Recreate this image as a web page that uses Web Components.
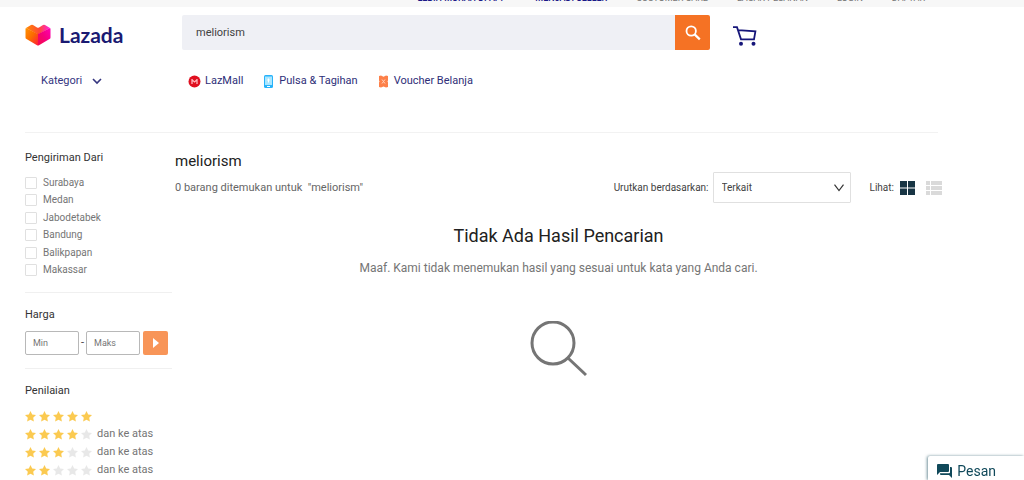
<!DOCTYPE html>
<html lang="id">
<head>
<meta charset="utf-8">
<meta name="viewport" content="width=device-width, initial-scale=1">
<title>meliorism - Lazada</title>
<style>
    body {
        margin: 0;
        background: #fff;
        color: #424242;
        font-family: Roboto, "Liberation Sans", sans-serif;
        font-size: 11px;
        line-height: 16px;
    }
</style>
</head>
<body>
<top-links>
    <a href="#app" class="hot">LEBIH MURAH DI APP</a>
    <a href="#seller" class="hot">MENJADI SELLER</a>
    <a href="#care">CUSTOMER CARE</a>
    <a href="#track">LACAK PESANAN</a>
    <a href="#login">LOGIN</a>
    <a href="#signup">DAFTAR</a>
</top-links>
<site-header query="meliorism"></site-header>
<category-nav>
    <channel-link icon="mall">LazMall</channel-link>
    <channel-link icon="phone">Pulsa &amp; Tagihan</channel-link>
    <channel-link icon="voucher">Voucher Belanja</channel-link>
</category-nav>
<search-page>
    <filter-panel slot="filters">
        <filter-group heading="Pengiriman Dari">
            <div style="display: grid; height: 105px; grid-auto-rows: 1fr">
                <check-option>Surabaya</check-option>
                <check-option>Medan</check-option>
                <check-option>Jabodetabek</check-option>
                <check-option>Bandung</check-option>
                <check-option>Balikpapan</check-option>
                <check-option>Makassar</check-option>
            </div>
        </filter-group>
        <filter-group heading="Harga">
            <price-range></price-range>
        </filter-group>
        <filter-group heading="Penilaian">
            <star-rating value="5"></star-rating>
            <star-rating value="4">dan ke atas</star-rating>
            <star-rating value="3">dan ke atas</star-rating>
            <star-rating value="2">dan ke atas</star-rating>
        </filter-group>
    </filter-panel>
    <result-bar query="meliorism" count="0"></result-bar>
    <empty-result heading="Tidak Ada Hasil Pencarian">
        Maaf. Kami tidak menemukan hasil yang sesuai untuk kata yang Anda cari.
    </empty-result>
</search-page>
<chat-button>Pesan</chat-button>

<script>
class TopLinks extends HTMLElement {
    connectedCallback() {
        this.attachShadow({ mode: 'open' });
        this.shadowRoot.innerHTML = `
            <style>
                :host {
                    display: block;
                    height: 7px;
                    overflow: hidden;
                    background: #f7f7f7;
                }
                nav {
                    display: flex;
                    justify-content: flex-end;
                    gap: 29px;
                    margin-top: -10px;
                    padding-right: 99px;
                }
                ::slotted(a) {
                    color: #757575;
                    font-size: 9px;
                    line-height: 16px;
                    white-space: nowrap;
                    text-decoration: none;
                }
                ::slotted(a.hot) {
                    color: #1a1a87;
                    font-weight: 500;
                }
            </style>
            <nav><slot></slot></nav>
        `;
    }
}
customElements.define('top-links', TopLinks);

class SiteHeader extends HTMLElement {
    connectedCallback() {
        this.attachShadow({ mode: 'open' });
        this.shadowRoot.innerHTML = `
            <style>
                :host {
                    display: block;
                    padding: 8px 82px 0 25px;
                }
                .row {
                    display: grid;
                    grid-template-columns: 157px minmax(0, 1fr) 232px;
                    align-items: center;
                }
                .logo {
                    display: flex;
                    align-items: center;
                    gap: 8px;
                    padding-top: 4px;
                    color: #1a1a72;
                    font: 700 21px/30px Lato, sans-serif;
                    text-decoration: none;
                }
                form {
                    display: flex;
                    height: 35px;
                }
                input {
                    flex: 1;
                    min-width: 0;
                    padding: 0 14px;
                    border: 0;
                    border-radius: 2px 0 0 2px;
                    background: #eff0f5;
                    color: #424242;
                    font: 11px/16px Roboto, sans-serif;
                }
                button {
                    display: grid;
                    place-items: center;
                    width: 35px;
                    padding: 0;
                    border: 0;
                    border-radius: 0 2px 2px 0;
                    background: #f57224;
                }
                .cart {
                    display: flex;
                    padding: 6px 0 0 23px;
                }
            </style>
            <header class="row">
                <a href="#home" class="logo">
                    <svg width="26" height="22" viewBox="0 0 26 22">
                        <defs>
                            <linearGradient id="left" x1="0" y1="0" x2="1" y2="1">
                                <stop offset="0" stop-color="#ff9200"/>
                                <stop offset=".5" stop-color="#fb6a00"/>
                                <stop offset="1" stop-color="#ff1a3c"/>
                            </linearGradient>
                            <linearGradient id="right" x1="1" y1="0" x2="0" y2="1">
                                <stop offset="0" stop-color="#ff00b4"/>
                                <stop offset=".5" stop-color="#f5007c"/>
                                <stop offset="1" stop-color="#f50a48"/>
                            </linearGradient>
                            <linearGradient id="top" x1="0" y1="0" x2="1" y2="0">
                                <stop offset="0" stop-color="#ff8a00"/>
                                <stop offset=".55" stop-color="#ff4a35"/>
                                <stop offset="1" stop-color="#ff20e0"/>
                            </linearGradient>
                        </defs>
                        <path d="M1 4 6 1Q7 .5 8 1L12 3.500Q13 4 14 3.500L18 1Q19 .5 20 1L25 4 13 10.500Z" fill="url(#top)"/>
                        <path d="M1 4Q.5 4.300.5 5V13.500Q.5 14.500 1.500 15L12 21.300Q12.500 21.600 13 21.600V10Z" fill="url(#left)"/>
                        <path d="M25 4Q25.500 4.300 25.500 5V13.500Q25.500 14.500 24.500 15L14 21.300Q13.500 21.600 13 21.600V10Z" fill="url(#right)"/>
                    </svg>
                    Lazada
                </a>
                <form role="search">
                    <input type="text" aria-label="Cari di Lazada" value="${this.getAttribute('query')}">
                    <button type="button" aria-label="Cari">
                        <svg width="16" height="16" viewBox="0 0 16 16" fill="none" stroke="#fff">
                            <circle cx="6.200" cy="6" r="4.700" stroke-width="1.800"/>
                            <path d="m9.600 9.400 5.200 5" stroke-width="2.200"/>
                        </svg>
                    </button>
                </form>
                <a href="#cart" class="cart" aria-label="Keranjang">
                    <svg width="24" height="20" viewBox="0 0 24 20" fill="none" stroke="#16167a" stroke-width="1.800">
                        <path d="M0 1.200H4L8 13.300H21L22.400 5.300 5.200 4.200"/>
                        <circle cx="8" cy="17.800" r="2" fill="#16167a" stroke="none"/>
                        <circle cx="20.500" cy="17.800" r="2" fill="#16167a" stroke="none"/>
                    </svg>
                </a>
            </header>
        `;
    }
}
customElements.define('site-header', SiteHeader);

class CategoryNav extends HTMLElement {
    connectedCallback() {
        this.attachShadow({ mode: 'open' });
        this.shadowRoot.innerHTML = `
            <style>
                :host {
                    display: block;
                    padding: 23px 82px 43px 25px;
                }
                nav {
                    display: flex;
                    align-items: center;
                }
                button {
                    display: flex;
                    align-items: center;
                    gap: 10px;
                    width: 163px;
                    padding: 0 0 0 16px;
                    border: 0;
                    background: none;
                    color: #35357f;
                    font: 11px/16px Roboto, sans-serif;
                }
                .channels {
                    display: flex;
                    gap: 19px;
                }
            </style>
            <nav>
                <button type="button">
                    Kategori
                    <svg width="10" height="7" viewBox="0 0 10 7" fill="none" stroke="#35357f" stroke-width="1.600">
                        <path d="m1 1 4 4 4-4"/>
                    </svg>
                </button>
                <div class="channels"><slot></slot></div>
            </nav>
        `;
    }
}
customElements.define('category-nav', CategoryNav);

const channelIcons = {
    mall: `
        <circle cx="6.500" cy="6.500" r="6" fill="#e01020"/>
        <path d="M4 4V9M9 4V9M4 4.800 6.500 7 9 4.800" fill="none" stroke="#ffb4ba" stroke-width="1.300"/>`,
    phone: `
        <rect x="2" y="0" width="9" height="13" rx="1.500" fill="#27b3fa"/>
        <rect x="3" y="1.500" width="7" height="8.500" fill="#a9e6ff"/>
        <path d="M6.500 3.500v4M5.200 5h2.600" stroke="#fff"/>
        <path d="M5 11.500h3" stroke="#fff"/>`,
    voucher: `
        <path d="M2 1 4 .5 6.500 1.800 9 .5 11 1V5.500Q10 6.500 11 7.500V12L9 12.500 6.500 11.500 4 12.500 2 12V7.500Q3 6.500 2 5.500Z" fill="#fd8049"/>
        <path d="M5 4.500 8 8.500M8 4.500 5 8.500" stroke="#ffd3bd"/>`
};

class ChannelLink extends HTMLElement {
    connectedCallback() {
        this.attachShadow({ mode: 'open' });
        this.shadowRoot.innerHTML = `
            <style>
                :host {
                    display: block;
                }
                a {
                    display: flex;
                    align-items: center;
                    gap: 4px;
                    color: #2e2e78;
                    text-decoration: none;
                    white-space: nowrap;
                }
            </style>
            <a href="#${this.getAttribute('icon')}">
                <svg width="13" height="13" viewBox="0 0 13 13">${channelIcons[this.getAttribute('icon')]}</svg>
                <span><slot></slot></span>
            </a>
        `;
    }
}
customElements.define('channel-link', ChannelLink);

class SearchPage extends HTMLElement {
    connectedCallback() {
        this.attachShadow({ mode: 'open' });
        this.shadowRoot.innerHTML = `
            <style>
                :host {
                    display: block;
                    padding: 0 82px 0 25px;
                }
                hr {
                    margin: 0 4px 0 0;
                    border: 0;
                    border-top: 1px solid #f2f2f2;
                }
                .columns {
                    display: grid;
                    grid-template-columns: 147px minmax(0, 1fr);
                    gap: 3px;
                    padding-top: 17px;
                }
            </style>
            <hr>
            <div class="columns">
                <slot name="filters"></slot>
                <main><slot></slot></main>
            </div>
        `;
    }
}
customElements.define('search-page', SearchPage);

class FilterPanel extends HTMLElement {
    connectedCallback() {
        this.attachShadow({ mode: 'open' });
        this.shadowRoot.innerHTML = `
            <style>
                :host {
                    display: block;
                }
                ::slotted(filter-group:not(:last-child)) {
                    margin-bottom: 14px;
                    padding-bottom: 13px;
                    border-bottom: 1px solid #f0f0f0;
                }
            </style>
            <aside><slot></slot></aside>
        `;
    }
}
customElements.define('filter-panel', FilterPanel);

class FilterGroup extends HTMLElement {
    connectedCallback() {
        this.attachShadow({ mode: 'open' });
        this.shadowRoot.innerHTML = `
            <style>
                :host {
                    display: block;
                }
                h2 {
                    margin: 0 0 8px;
                    color: #333;
                    font-size: 11px;
                    font-weight: 400;
                    line-height: 16px;
                }
            </style>
            <section>
                <h2>${this.getAttribute('heading')}</h2>
                <slot></slot>
            </section>
        `;
    }
}
customElements.define('filter-group', FilterGroup);

class CheckOption extends HTMLElement {
    connectedCallback() {
        this.attachShadow({ mode: 'open' });
        this.shadowRoot.innerHTML = `
            <style>
                :host {
                    display: flex;
                    align-items: center;
                }
                label {
                    display: flex;
                    align-items: center;
                    gap: 6px;
                    color: #757575;
                    font-size: 10px;
                }
                input {
                    appearance: none;
                    box-sizing: border-box;
                    width: 12px;
                    height: 12px;
                    margin: 0;
                    border: 1px solid #e0e0e0;
                    border-radius: 1px;
                }
                input:checked {
                    background: #f57224;
                }
            </style>
            <label><input type="checkbox"><span><slot></slot></span></label>
        `;
    }
}
customElements.define('check-option', CheckOption);

class PriceRange extends HTMLElement {
    connectedCallback() {
        this.attachShadow({ mode: 'open' });
        this.shadowRoot.innerHTML = `
            <style>
                :host {
                    display: block;
                }
                form {
                    display: flex;
                    align-items: center;
                    gap: 2px;
                }
                input {
                    box-sizing: border-box;
                    width: 54px;
                    height: 24px;
                    padding: 0 7px;
                    border: 1px solid #b8b8b8;
                    border-radius: 2px;
                    font: 9px/16px Roboto, sans-serif;
                }
                input::placeholder {
                    color: #757575;
                }
                button {
                    display: grid;
                    place-items: center;
                    width: 25px;
                    height: 24px;
                    margin-left: 1px;
                    padding: 0;
                    border: 0;
                    border-radius: 2px;
                    background: #f89558;
                }
            </style>
            <form>
                <input type="text" placeholder="Min" aria-label="Harga minimum">
                <span>-</span>
                <input type="text" placeholder="Maks" aria-label="Harga maksimum">
                <button type="button" aria-label="Terapkan harga">
                    <svg width="6" height="10" viewBox="0 0 6 10"><path d="M0 0 6 5 0 10Z" fill="#fff"/></svg>
                </button>
            </form>
        `;
    }
}
customElements.define('price-range', PriceRange);

class StarRating extends HTMLElement {
    connectedCallback() {
        const value = Number(this.getAttribute('value'));
        const stars = [1, 2, 3, 4, 5].map(n => `
            <svg width="11" height="11" viewBox="0 0 11 11">
                <path d="M5.500 0 7.200 3.500 11 4 8.200 6.700 8.900 10.600 5.500 8.800 2.100 10.600 2.800 6.700 0 4 3.800 3.500Z" fill="${n <= value ? '#fbca51' : '#e8e8e8'}"/>
            </svg>`).join('');
        this.attachShadow({ mode: 'open' });
        this.shadowRoot.innerHTML = `
            <style>
                :host {
                    display: block;
                }
                a {
                    display: flex;
                    align-items: center;
                    gap: 5px;
                    color: #757575;
                    line-height: 18px;
                    min-height: 18px;
                    text-decoration: none;
                }
                .stars {
                    display: flex;
                    gap: 3px;
                }
            </style>
            <a href="#rating-${value}" aria-label="${value} bintang">
                <span class="stars">${stars}</span>
                <span><slot></slot></span>
            </a>
        `;
    }
}
customElements.define('star-rating', StarRating);

class ResultBar extends HTMLElement {
    connectedCallback() {
        const query = this.getAttribute('query');
        this.attachShadow({ mode: 'open' });
        this.shadowRoot.innerHTML = `
            <style>
                :host {
                    display: block;
                }
                h1 {
                    margin: 1px 0;
                    color: #212121;
                    font-size: 15px;
                    font-weight: 400;
                    line-height: 20px;
                }
                .bar {
                    display: flex;
                    align-items: center;
                }
                .count {
                    flex: 1;
                    margin: 0;
                    color: #666;
                    white-space: pre;
                }
                label {
                    font-size: 10px;
                }
                .select {
                    display: grid;
                    align-items: center;
                    margin: 0 19px 0 4px;
                }
                .select > * {
                    grid-area: 1 / 1;
                }
                .select svg {
                    justify-self: end;
                    margin-right: 7px;
                    pointer-events: none;
                }
                select {
                    appearance: none;
                    width: 138px;
                    height: 31px;
                    padding: 0 8px;
                    border: 1px solid #e0e0e0;
                    border-radius: 1px;
                    background: #fff;
                    color: #424242;
                    font: 10px/16px Roboto, sans-serif;
                }
                .view {
                    font-size: 10px;
                }
                button {
                    display: flex;
                    margin-left: 6px;
                    padding: 0;
                    border: 0;
                    background: none;
                }
                button + button {
                    margin-left: 11px;
                }
            </style>
            <h1>${query}</h1>
            <div class="bar">
                <p class="count">${this.getAttribute('count')} barang ditemukan untuk  "${query}"</p>
                <label for="sort">Urutkan berdasarkan:</label>
                <div class="select">
                    <select id="sort">
                        <option>Terkait</option>
                        <option>Harga rendah ke tinggi</option>
                        <option>Harga tinggi ke rendah</option>
                    </select>
                    <svg width="10" height="8" viewBox="0 0 10 8" fill="none" stroke="#333" stroke-width="1.200">
                        <path d="M.5.700 5 6.500 9.500.700"/>
                    </svg>
                </div>
                <span class="view">Lihat:</span>
                <button type="button" aria-label="Tampilan kisi">
                    <svg width="15" height="14" viewBox="0 0 15 14" fill="#183544">
                        <path d="M0 0h7v6.500H0ZM8 0h7v6.500H8ZM0 7.500h7V14H0ZM8 7.500h7V14H8Z"/>
                    </svg>
                </button>
                <button type="button" aria-label="Tampilan daftar">
                    <svg width="16" height="14" viewBox="0 0 16 14" fill="#dadada">
                        <path d="M0 0h4v4H0ZM5 0h11v4H5ZM0 5h4v4H0ZM5 5h11v4H5ZM0 10h4v4H0ZM5 10h11v4H5Z"/>
                    </svg>
                </button>
            </div>
        `;
    }
}
customElements.define('result-bar', ResultBar);

class EmptyResult extends HTMLElement {
    connectedCallback() {
        this.attachShadow({ mode: 'open' });
        this.shadowRoot.innerHTML = `
            <style>
                :host {
                    display: block;
                    padding-top: 21px;
                    text-align: center;
                }
                h2 {
                    margin: 0;
                    color: #212121;
                    font-size: 18px;
                    font-weight: 400;
                    line-height: 24px;
                }
                p {
                    margin: 12px 0 45px;
                    color: #757575;
                    font-size: 12px;
                    line-height: 16px;
                }
                svg {
                    display: block;
                    margin: 0 auto;
                }
            </style>
            <h2>${this.getAttribute('heading')}</h2>
            <p><slot></slot></p>
            <svg width="58" height="56" viewBox="0 0 58 56" fill="none" stroke="#757575" stroke-width="3">
                <circle cx="23" cy="22" r="21"/>
                <path d="m38 37 18 17"/>
            </svg>
        `;
    }
}
customElements.define('empty-result', EmptyResult);

class ChatButton extends HTMLElement {
    connectedCallback() {
        this.attachShadow({ mode: 'open' });
        this.shadowRoot.innerHTML = `
            <style>
                :host {
                    position: fixed;
                    right: 0;
                    bottom: 0;
                }
                button {
                    display: flex;
                    align-items: center;
                    gap: 5px;
                    padding: 6px 28px 0 9px;
                    border: 0;
                    border-radius: 2px 0 0 0;
                    background: #fff;
                    box-shadow: -1px 0 3px rgba(24, 75, 90, 0.6);
                    color: #10495a;
                    font: 14px/18px Roboto, sans-serif;
                }
            </style>
            <button type="button">
                <svg width="15" height="14" viewBox="0 0 15 14" fill="#10495a">
                    <path d="M1 0H11Q12 0 12 1V7Q12 8 11 8H3L0 11V1Q0 0 1 0Z"/>
                    <path d="M13 3H14Q15 3 15 4V14L12 11H4Q3 11 3 10V9.300H12Q13 9.300 13 8.500Z"/>
                </svg>
                <slot></slot>
            </button>
        `;
    }
}
customElements.define('chat-button', ChatButton);
</script>
</body>
</html>
